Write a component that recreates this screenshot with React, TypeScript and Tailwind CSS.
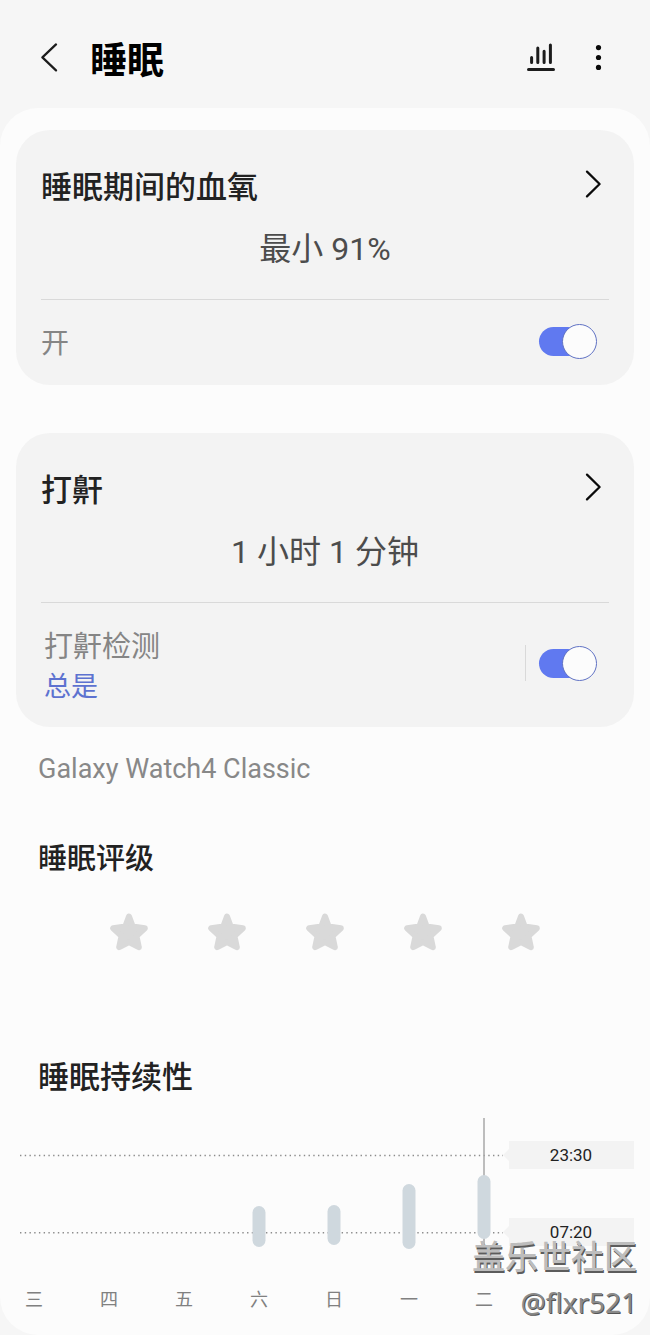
import { useState } from 'react';

const days = ['三', '四', '五', '六', '日', '一', '二'];

// x is the bar center, from/to its vertical extent inside the plot
const bars = [
  { x: 239, from: 88, to: 129 },
  { x: 314, from: 87, to: 127 },
  { x: 389, from: 66, to: 131 },
  { x: 464, from: 57, to: 121 },
];

function ChevronRight() {
  return (
    <svg className="mr-2 h-7 w-4 shrink-0" viewBox="0 0 16 28" fill="none" stroke="#0a0a0a" strokeWidth="2.2" strokeLinecap="round" strokeLinejoin="round" aria-hidden="true">
      <path d="M2 1.6 14.6 14 2 26.4" />
    </svg>
  );
}

function Switch({ id }: { id: string }) {
  const [on, setOn] = useState(true);
  return (
    <input
      id={id}
      type="checkbox"
      role="switch"
      checked={on}
      onChange={(e) => setOn(e.target.checked)}
      className="relative mr-3 h-[35px] w-[58px] shrink-0 cursor-pointer appearance-none
        before:absolute before:top-[3px] before:left-0 before:h-[29px] before:w-[54px] before:rounded-full before:bg-[#b0b0b0] checked:before:bg-[#6079f0]
        after:absolute after:top-0 after:left-0 after:size-[35px] after:rounded-full after:border after:border-[#6072c4] after:bg-[#fcfcfc] checked:after:left-[23px]"
    />
  );
}

function CardTop({ title, value }: { title: string; value: string }) {
  return (
    <>
      <a href="#" className="flex items-start justify-between">
        <h2 className="pt-1 text-[31px] leading-10 font-medium text-[#222]">{title}</h2>
        <span className="flex h-10 items-center">
          <ChevronRight />
        </span>
      </a>
      <p className="mt-[21px] mb-[30px] text-center text-[32px] leading-10 text-[#4c4c4c]">{value}</p>
    </>
  );
}

function Star({ index }: { index: number }) {
  return (
    <button type="button" aria-label={`${index} 星`} className="cursor-pointer">
      <svg className="block size-[38px]" viewBox="0 0 38 38" fill="#d9d9d9" stroke="#d9d9d9" strokeWidth="6" strokeLinejoin="round">
        <path d="M19 3.6 22.6 13.4 34.8 15.2 26.4 23 28.8 34.2 19 29 9.2 34.2 11.6 23 3.2 15.2 15.4 13.4Z" />
      </svg>
    </button>
  );
}

function TimeLabel({ time }: { time: string }) {
  return (
    <div className="h-7 bg-[#f3f3f3] pl-[5px] text-center text-[17px] leading-7 text-[#222] [clip-path:polygon(6px_0,100%_0,100%_100%,6px_100%,6px_20px,0_14px,6px_8px)]">
      {time}
    </div>
  );
}

function SleepChart() {
  return (
    <div>
      <div className="flex items-start pr-4 pl-5">
        <svg className="min-w-0 flex-1" viewBox="0 0 483 142" fill="none" role="img" aria-label="睡眠持续性">
          <g stroke="#8c8c8c" strokeWidth="1.4" strokeDasharray="1.4 3.33">
            <path d="M0 37.5H483" />
            <path d="M0 114.7H483" />
          </g>
          <path d="M464 0V126" stroke="#a9a9a9" strokeWidth="1.5" />
          {bars.map((bar) => (
            <rect key={bar.x} x={bar.x - 6.5} y={bar.from} width="13" height={bar.to - bar.from} rx="6.5" fill="#cfd8de" />
          ))}
        </svg>
        <div className="flex w-[131px] flex-col gap-[49px] pt-[23px]">
          <TimeLabel time="23:30" />
          <TimeLabel time="07:20" />
        </div>
      </div>
      <ul className="mt-[26px] flex justify-between pr-[157px] pl-[25px] text-lg leading-7 text-[#808080]">
        {days.map((day) => (
          <li key={day}>{day}</li>
        ))}
      </ul>
    </div>
  );
}

export default function App() {
  return (
    <div className="relative bg-[#f6f6f6] font-[Roboto,'Noto_Sans_CJK_SC',sans-serif]">
      <header className="flex h-[108px] items-center pt-2 pr-11 pl-10">
        <button type="button" aria-label="返回" className="cursor-pointer">
          <svg className="block h-[30px] w-[18px]" viewBox="0 0 18 30" fill="none" stroke="#1c1c1c" strokeWidth="2.2" strokeLinecap="round" strokeLinejoin="round">
            <path d="M16 1.4 2.4 14.4 16 27.4" />
          </svg>
        </button>
        <h1 className="ml-8 flex-1 pt-2 text-[37px] leading-[48px] font-bold text-black">睡眠</h1>
        <button type="button" aria-label="趋势" className="cursor-pointer">
          <svg className="block size-[30px]" viewBox="0 0 30 30" fill="none" stroke="#1c1c1c" strokeWidth="3" strokeLinecap="round">
            <path d="M6.6 14.5v5M12.8 5v14.5M19.1 8.2v11.3M25.4 2v17.5M3.5 26.6h25" />
          </svg>
        </button>
        <button type="button" aria-label="更多" className="ml-[37px] cursor-pointer">
          <svg className="block h-[30px] w-[14px]" viewBox="0 0 14 30" fill="#0a0a0a">
            <circle cx="6.5" cy="4.6" r="2.6" />
            <circle cx="6.5" cy="14.5" r="2.6" />
            <circle cx="6.5" cy="24.4" r="2.6" />
          </svg>
        </button>
      </header>

      <main className="rounded-[38px] bg-[#fcfcfc] pt-[22px] pb-[21px]">
        <section className="mx-4 rounded-[34px] bg-[#f3f3f3] px-[25px] pt-[34px]">
          <CardTop title="睡眠期间的血氧" value="最小 91%" />
          <div className="flex h-[86px] items-center justify-between border-t border-[#d9d9d9] pb-0.5">
            <label htmlFor="oxygen" className="pt-1 text-[28px] leading-10 text-[#858585]">开</label>
            <Switch id="oxygen" />
          </div>
        </section>

        <section className="mx-4 mt-12 rounded-[34px] bg-[#f3f3f3] px-[25px] pt-[34px]">
          <CardTop title="打鼾" value="1 小时 1 分钟" />
          <div className="flex h-[125px] items-center border-t border-[#d9d9d9] pb-1">
            <div className="flex flex-1 flex-col pt-2 pl-[3px] leading-10">
              <label htmlFor="snore" className="text-[29px] text-[#858585]">打鼾检测</label>
              <a href="#" className="text-[27px] text-[#5d72d0]">总是</a>
            </div>
            <div className="mr-[13px] h-9 w-px bg-[#d9d9d9]" />
            <Switch id="snore" />
          </div>
        </section>

        <p className="mt-[22px] px-[38px] text-[27px] leading-10 text-[#888]">Galaxy Watch4 Classic</p>

        <section className="mt-[50px]">
          <h2 className="px-[38px] text-[29px] leading-10 font-medium text-[#222]">睡眠评级</h2>
          <div className="mt-[34px] flex justify-center gap-[60px]">
            {[1, 2, 3, 4, 5].map((n) => (
              <Star key={n} index={n} />
            ))}
          </div>
        </section>

        <section className="mt-[107px]">
          <h2 className="mb-5 px-[38px] text-[31px] leading-10 font-medium text-[#222]">睡眠持续性</h2>
          <SleepChart />
        </section>
      </main>

      <div className="pointer-events-none absolute right-[13px] bottom-[11px] text-right">
        <p className="text-[33px] leading-[45px] font-medium text-[#bdbdbd] [text-shadow:1px_2px_0_#5c5c5c]">盖乐世社区</p>
        <p className="font-['Noto_Sans',sans-serif] text-[28px] leading-[44px] text-[#8a8a8a] [text-shadow:1px_1px_0_#555]">@flxr521</p>
      </div>
    </div>
  );
}
